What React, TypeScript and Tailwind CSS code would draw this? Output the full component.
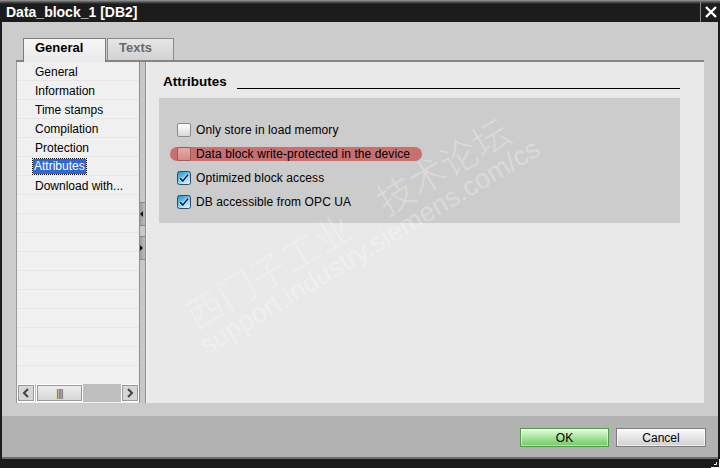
import React from "react";

const font = { fontFamily: '"Liberation Sans", Arial, sans-serif' };

function Checkbox({ checked, tinted }: { checked?: boolean; tinted?: boolean }) {
  if (checked) {
    return (
      <svg width="14" height="14" viewBox="0 0 14 14" className="shrink-0">
        <defs>
          <linearGradient id="cbg" x1="0" y1="0" x2="0.6" y2="1">
            <stop offset="0" stopColor="#1d8fd6" />
            <stop offset="0.55" stopColor="#6cc9f2" />
            <stop offset="1" stopColor="#c9f1ff" />
          </linearGradient>
        </defs>
        <rect x="0.5" y="0.5" width="13" height="13" rx="2" fill="url(#cbg)" stroke="#33495f" />
        <path d="M3 7.2 L5.8 10 L11 3.6" fill="none" stroke="#ffffff" strokeWidth="3" strokeLinejoin="round" />
        <path d="M3 7.2 L5.8 10 L11 3.6" fill="none" stroke="#12305a" strokeWidth="1.8" strokeLinejoin="round" />
      </svg>
    );
  }
  return (
    <div
      className={
        "w-[14px] h-[14px] shrink-0 rounded-[2px] border " +
        (tinted
          ? "border-[#9c5a5a] bg-[linear-gradient(to_bottom,#e6a9a9,#d78a8a)]"
          : "border-[#8c8c8c] bg-[linear-gradient(to_bottom,#ffffff,#d9d9d9)]")
      }
    />
  );
}

const navItems = ["General", "Information", "Time stamps", "Compilation", "Protection", "Attributes", "Download with..."];

export default function App() {
  const rows = Array.from({ length: 17 }, (_, i) => navItems[i] ?? "");
  return (
    <div className="relative w-[720px] h-[468px] overflow-hidden flex flex-col bg-[#1c1c1c] text-black" style={font}>
      {/* Title bar */}
      <div className="h-[22px] shrink-0 flex items-stretch bg-[linear-gradient(to_bottom,#9a9a9a_0px,#555555_2px,#1c1c1c_4px,#1c1c1c_100%)]">
        <div className="flex-1 pl-[6px] pt-[3px] text-white font-bold text-[14px] leading-[18px]">Data_block_1 [DB2]</div>
        <div className="w-px bg-[#8a8a8a] mt-[2px]" />
        <div className="w-[19px] flex items-center justify-center pt-[2px]">
          <svg width="12" height="12" viewBox="0 0 12 12">
            <path d="M1 1 L11 11 M11 1 L1 11" stroke="#ffffff" strokeWidth="2.4" />
          </svg>
        </div>
      </div>

      {/* Body */}
      <div className="flex-1 flex flex-col mx-[2px] bg-[#cccccc]">
        <div className="h-[394px] shrink-0 flex flex-col pt-[16px] pl-[14px] pr-[14px]">
          {/* Tabs */}
          <div className="h-[22px] shrink-0 flex items-end pl-[7px] gap-[1px] relative z-10">
            <div className="h-[24px] w-[83px] border border-b-0 border-[#7b7b7b] bg-[linear-gradient(to_bottom,#f6f6f6,#eaeaea)] font-bold text-[13px] leading-[16px] pl-[11px] pt-[1px] -mb-[2px]">
              General
            </div>
            <div className="h-[22px] w-[67px] border border-b-0 border-[#8a8a8a] bg-[linear-gradient(to_bottom,#e6e6e6,#d2d2d2)] font-bold text-[13px] leading-[16px] text-[#6a6a6a] pl-[11px] pt-[1px]">
              Texts
            </div>
          </div>
          {/* Panel */}
          <div className="h-[343px] shrink-0 flex border-t-2 border-[#858585]">
            <div className="w-px bg-[#9a9a9a]" />
            {/* Nav */}
            <div className="w-[122px] flex flex-col bg-[#f0f0f0]">
              <div className="flex-1 overflow-hidden">
                {rows.map((r, i) => (
                  <div key={i} className="h-[19px] border-b border-[#e6e6e6] pl-[16px] text-[12px] leading-[18px] flex items-center pt-[1px]">
                    {r === "Attributes" ? (
                      <span className="px-[1px] bg-[#3167d2] text-white outline outline-1 outline-dotted outline-[#000] leading-[15px]">
                        {r}
                      </span>
                    ) : (
                      <span className="pl-[2px]">{r}</span>
                    )}
                  </div>
                ))}
              </div>
              <div className="h-[18px] shrink-0 flex bg-[#bfbfbf] mb-[1px]">
                <div className="w-[18px] border border-[#ffffff] bg-[#d6d6d6] outline outline-1 outline-[#9a9a9a] -outline-offset-2 flex items-center justify-center">
                  <svg width="8" height="10" viewBox="0 0 8 10"><path d="M6 1 L2 5 L6 9" fill="none" stroke="#444" strokeWidth="2" /></svg>
                </div>
                <div className="w-[47px] ml-px border border-[#ffffff] bg-[linear-gradient(to_bottom,#eeeeee,#d6d6d6)] outline outline-1 outline-[#9a9a9a] -outline-offset-2 flex items-center justify-center text-[10px] text-[#555] tracking-[-1px]">
                  ||||
                </div>
                <div className="flex-1" />
                <div className="w-[18px] border border-[#ffffff] bg-[#d6d6d6] outline outline-1 outline-[#9a9a9a] -outline-offset-2 flex items-center justify-center">
                  <svg width="8" height="10" viewBox="0 0 8 10"><path d="M2 1 L6 5 L2 9" fill="none" stroke="#444" strokeWidth="2" /></svg>
                </div>
              </div>
            </div>
            {/* Splitter */}
            <div className="w-px bg-[#8e8e8e]" />
            <div className="w-[5px] bg-[#c8c8c8] flex flex-col">
              <div className="h-[140px]" />
              <div className="h-[24px] bg-[linear-gradient(to_right,#9c9c9c,#bdbdbd)] border-y border-[#8a8a8a] flex items-center">
                <svg width="4" height="6" viewBox="0 0 4 6"><path d="M0 3 L3 0 L3 6 Z" fill="#111" /></svg>
              </div>
              <div className="h-[10px]" />
              <div className="h-[24px] bg-[linear-gradient(to_right,#9c9c9c,#bdbdbd)] border-y border-[#8a8a8a] flex items-center">
                <svg width="4" height="6" viewBox="0 0 4 6"><path d="M0 0 L3 3 L0 6 Z" fill="#111" /></svg>
              </div>
            </div>
            <div className="w-px bg-[#8e8e8e]" />
            <div className="w-px bg-[#f4f4f4]" />
            {/* Content */}
            <div className="flex-1 bg-[#e9e9e9] pl-[12px] pr-[24px] pt-[12px]">
              <div className="flex items-end gap-[10px] pl-[4px] h-[16px]">
                <div className="font-bold text-[13.5px] leading-[16px]">Attributes</div>
                <div className="flex-1 border-b border-black mb-[1px]" />
              </div>
              <div className="mt-[8px] h-[125px] bg-[#cccccc] pt-[20px] pl-[18px]">
                {[
                  { t: "Only store in load memory" },
                  { t: "Data block write-protected in the device", hl: true },
                  { t: "Optimized block access", c: true },
                  { t: "DB accessible from OPC UA", c: true },
                ].map((r, i) => (
                  <div key={i} className="relative h-[24px] flex items-center gap-[5px] text-[12px]">
                    {r.hl && <div className="absolute left-[-7px] top-[5px] w-[252px] h-[14px] rounded-full bg-[#c86f6f]" />}
                    <div className="relative flex items-center gap-[5px]">
                      <Checkbox checked={r.c} tinted={r.hl} />
                      <span className="leading-[14px] tracking-[0.1px]">{r.t}</span>
                    </div>
                  </div>
                ))}
              </div>
            </div>
          </div>
        </div>
        {/* Footer */}
        <div className="flex-1 bg-[#b2b2b2] flex justify-end items-start pt-[12px] pr-[12px] gap-[7px]">
          <div className="w-[89px] h-[19px] border border-[#4f9a4a] bg-[linear-gradient(to_bottom,#eafbe5,#a5e59a_50%,#6fc865)] flex items-center justify-center text-[12px] shadow-[inset_0_0_0_1px_rgba(255,255,255,0.5)]">
            OK
          </div>
          <div className="w-[90px] h-[19px] border border-[#7d7d7d] bg-[linear-gradient(to_bottom,#fbfbfb,#e6e6e6_50%,#cfcfcf)] flex items-center justify-center text-[12px] shadow-[inset_0_0_0_1px_rgba(255,255,255,0.6)]">
            Cancel
          </div>
        </div>
      </div>
      {/* Bottom edge */}
      <div className="h-[2px] shrink-0 mx-[2px] bg-[#6c6c6c]" />
      <div className="h-[9px] shrink-0 relative">
        <svg className="absolute right-0 bottom-0" width="9" height="9" viewBox="0 0 9 9">
          <path d="M8.5 0 V8.5 H0 M5.5 3 V5.5 H3" fill="none" stroke="#ffffff" strokeWidth="1" />
        </svg>
      </div>

      {/* Watermark */}
      <div className="absolute left-[178px] top-[300px] origin-top-left rotate-[-31deg] pointer-events-none text-[rgba(255,255,255,0.3)] whitespace-nowrap">
        <div className="text-[37px] leading-[40px] font-light" style={{ fontFamily: '"Noto Sans CJK SC", sans-serif' }}>
          西门子工业　技术论坛
        </div>
        <div className="text-[27px] leading-[26px] -ml-[4px]" style={font}>
          support.industry.siemens.com/cs
        </div>
      </div>
    </div>
  );
}
